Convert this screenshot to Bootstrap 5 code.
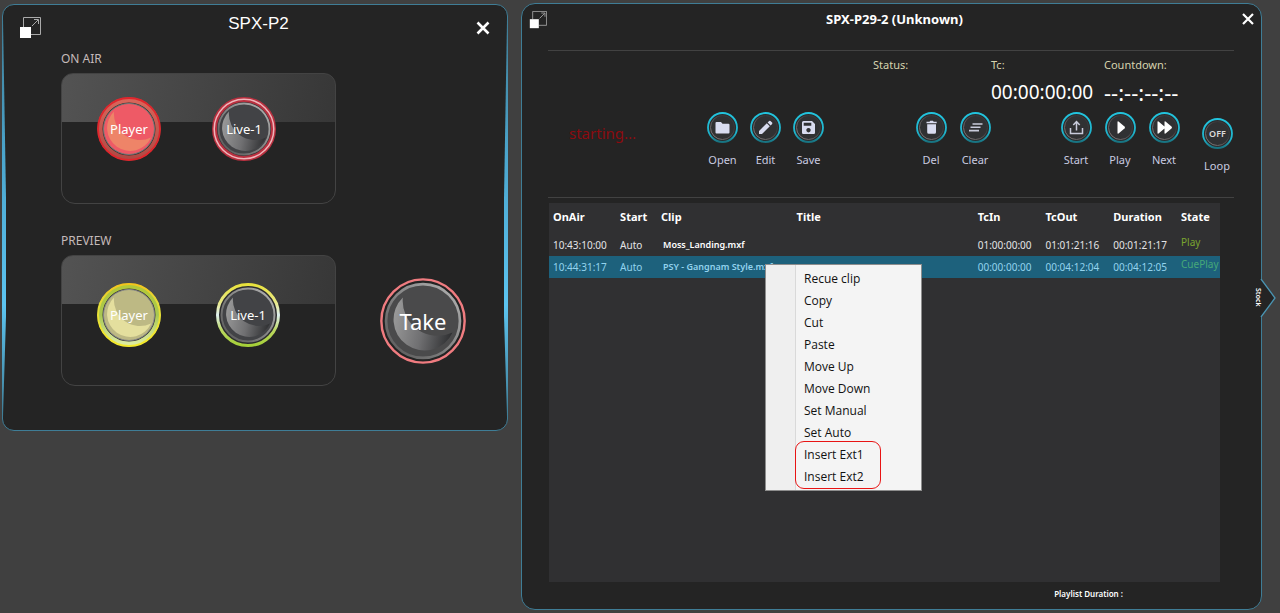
<!DOCTYPE html>
<html lang="en">
<head>
<meta charset="utf-8">
<meta name="viewport" content="width=device-width, initial-scale=1">
<title>SPX playout</title>
<link href="https://cdn.jsdelivr.net/npm/bootstrap@5.3.0/dist/css/bootstrap.min.css" rel="stylesheet">
<style>
  :root { --edge: #3f7d96; --glow: #52b4dc; --panel: #242424; --ui: "Noto Sans", "Open Sans", sans-serif; }
  body { background: #404040; color: #fff; font-family: var(--ui); font-size: 11px; line-height: 16px; min-height: 100vh; }
  button { font-family: inherit; color: inherit; }
  .desk { padding: 3px 18px 3px 2px; gap: 13px; min-height: 100vh; }
  .panel { background: var(--panel); border: 1px solid var(--edge); position: relative; min-width: 0; }
  .ghost { background: none; border: 0; padding: 0; line-height: 0; }

  /* switcher panel */
  .switcher { flex: 405 1 0; border-radius: 12px; margin-top: 1px; padding: 0 41px 44px 58px; }
  .switcher::before, .switcher::after { content: ""; position: absolute; top: 14px; bottom: 14px; width: 5px; background: linear-gradient(#3f7d96, #4ba6ce 35%, #5cc4f0 72%, #3f7d96); }
  .switcher::before { left: -1px; clip-path: polygon(0 0, 1px 0, 4px 45%, 4px 75%, 1px 100%, 0 100%); }
  .switcher::after { right: -1px; clip-path: polygon(100% 0, 4px 0, 1px 45%, 1px 75%, 4px 100%, 100% 100%); }
  .switcher-head { margin: 0 -24px 0 -42px; height: 45px; }
  .switcher-title { font: 17px/38px "Liberation Sans", Arial, sans-serif; margin: 0; }
  .switcher-body { gap: 44px; }
  .bus-label { font-size: 12px; line-height: 18px; color: #c4baba; margin: 0 0 5px; font-weight: 400; }
  .bus { height: 131px; border: 1px solid #434343; border-radius: 12px 12px 14px 14px; padding: 23px 35px; gap: 51px; align-items: flex-start; background: linear-gradient(100deg, #535353, #373737) top / 100% 48px no-repeat; }
  .bus-preview { padding-top: 27px; gap: 55px; }
  .bus-gap { height: 28px; }
  .orb { display: grid; place-items: center; width: 64px; height: 64px; font-size: 13px; flex: none; }
  .orb > * { grid-area: 1 / 1; }
  .orb svg { width: 100%; height: 100%; }
  .orb-take { width: 86px; height: 86px; font-size: 22px; margin-bottom: 22px; }

  /* playlist panel */
  .playlist { flex: 686 1 0; border-radius: 14px; padding: 0 27px 0 26px; }
  .playlist-head { margin: 0 -20px 0 -19px; height: 46px; padding-top: 7px; }
  .playlist-title { font-size: 13px; line-height: 16px; font-weight: 700; margin: 0; }
  .rule { border-top: 1px solid #424242; opacity: 1; margin: 0; }
  .clocks { height: 61px; padding-top: 6px; color: #d6d3ae; }
  .clock-cell { width: 113px; }
  .clock-cell-status { width: 118px; }
  .clock-cell-count { width: 130px; }
  .clock-value { color: #fff; font-size: 19px; line-height: 24px; margin-top: 7px; display: block; }
  .clock-cell-count .clock-value { font-size: 22px; }
  .tools { height: 85px; }
  .starting { color: #8c0b0f; font-size: 15px; line-height: 20px; margin: 11px auto 0 21px; }
  .tool { width: 44px; background: none; border: 0; padding: 0; color: #c9cbe0; font-size: 11px; line-height: 16px; }
  .tool svg { display: block; width: 31px; height: 31px; margin: 0 auto 9px; }
  .tool-compact { width: 43px; }
  .tool-loop { width: 34px; margin: 6px 0 0 14px; }
  .group-edit { margin-right: 79px; }
  .group-clear { margin-right: 57px; }
  .list-area { background: #303032; margin: 5px 14px 0 1px; position: relative; min-height: 379px; }
  .clips { table-layout: fixed; width: 100%; border-collapse: collapse; white-space: nowrap; }
  .clips th, .clips td { padding: 0 0 0 4px; height: 22px; font-size: 10px; color: #e4e4e6; }
  .clips thead th { height: 31px; font-size: 11px; padding-bottom: 3px; color: #fff; }
  .clips .clip-name { font-size: 9px; font-weight: 600; padding-left: 6px; color: #fff; }
  .clips .state { vertical-align: top; line-height: 16px; color: #7ba52f; }
  .clips .selected { background: #1d617c; }
  .clips .selected td { color: #93d3ee; }
  .clips .selected .state { color: #46a878; }
  .w-air { width: 10%; } .w-start { width: 6.1%; } .w-clip { width: 20.2%; } .w-title { width: 27%; } .w-tc { width: 10.1%; }
  .total { font-size: 8px; line-height: 12px; font-weight: 600; margin: 6px 111px 9px 0; }

  .clip-menu { --bs-dropdown-min-width: 157px; left: 216px; top: 61px; padding: 3px 1px 2px; border: 1px solid #8d8d8d; border-radius: 0; background: linear-gradient(90deg, #efefef 29px, #d9d9d9 29px 30px, #f4f4f4 30px); font-family: "Open Sans", "Noto Sans", sans-serif; }
  .clip-menu .dropdown-item { font-size: 12px; line-height: 22px; padding: 0 0 0 37px; color: #111; }
  .ext-group { position: relative; }
  .ext-group::after { content: ""; position: absolute; inset: -3px 39px -1px 28px; border: 1px solid #e81414; border-radius: 9px; pointer-events: none; }

  .stock { position: absolute; left: calc(100% - 8px); top: 275px; width: 23px; height: 38px; }
  .stock svg { position: absolute; left: 7px; top: 0; width: 16px; height: 38px; }
  .stock span { position: absolute; left: 0; top: 9px; writing-mode: vertical-rl; font-size: 7px; line-height: 10px; font-weight: 600; }
</style>
</head>
<body>
<svg width="0" height="0" class="position-absolute" aria-hidden="true">
  <defs>
    <linearGradient id="gRed" x2="0" y2="1"><stop stop-color="#d9665a"/><stop offset="1" stop-color="#b04a44"/></linearGradient>
    <linearGradient id="gYel" x2="0" y2="1"><stop stop-color="#f4c41c"/><stop offset=".3" stop-color="#e3dc3a"/><stop offset="1" stop-color="#f4e92a"/></linearGradient>
    <linearGradient id="gLime" x2="0" y2="1"><stop stop-color="#b3c838"/><stop offset=".5" stop-color="#a9c852"/><stop offset="1" stop-color="#dcebA4"/></linearGradient>
    <linearGradient id="gLive" x2="0" y2="1"><stop stop-color="#e8e23c"/><stop offset=".3" stop-color="#e9e98a"/><stop offset=".5" stop-color="#dff0f0"/><stop offset=".75" stop-color="#bcd860"/><stop offset="1" stop-color="#a5cf38"/></linearGradient>
    <linearGradient id="gGrey" x1="0" y1=".4" x2="1" y2=".6"><stop stop-color="#989898"/><stop offset=".5" stop-color="#707072"/><stop offset="1" stop-color="#303133"/></linearGradient>
    <linearGradient id="gRim" x1="0" y1="1" x2="1" y2="0"><stop stop-color="#555"/><stop offset="1" stop-color="#b4b4b4"/></linearGradient>
    <linearGradient id="gCyan" x2="0" y2="1"><stop stop-color="#22c4de"/><stop offset=".7" stop-color="#1fb4cc"/><stop offset="1" stop-color="#18717f"/></linearGradient>
    <linearGradient id="gLip" x1="0" y1="1" x2="1" y2="0"><stop stop-color="#8d8585"/><stop offset=".7" stop-color="#3a3a3c"/></linearGradient>
    <path id="moon" d="M17 14.500A23 23 0 1 0 54 40.500A26 26 0 0 1 17 14.500Z"/>
    <g id="knob"><circle cx="15.500" cy="15.500" r="14.500" fill="#2b2b2d" stroke="url(#gCyan)" stroke-width="1.800"/><circle cx="15.500" cy="15.500" r="12" fill="#303133" stroke="url(#gLip)"/></g>
    <g id="pop" fill="none"><path d="M4.500 10V.5h17v17H12" stroke="#aaa"/><path d="M13 9l6-6M15 2.500h4.500V7" stroke="#aaa"/><path d="M1 10h11v11H1z" fill="#fff"/></g>
  </defs>
</svg>

<main class="desk d-flex align-items-start">
  <section class="panel switcher">
    <header class="switcher-head d-flex justify-content-between">
      <button class="ghost" aria-label="Detach"><svg width="22" height="22" viewBox="0 0 22 22"><use href="#pop"/></svg></button>
      <h1 class="switcher-title">SPX-P2</h1>
      <button class="ghost" aria-label="Close"><svg width="14" height="14" viewBox="0 0 14 14"><path d="M1.500 1.500l11 11m0-11l-11 11" stroke="#fff" stroke-width="2.600"/></svg></button>
    </header>
    <div class="switcher-body d-flex align-items-end">
      <div class="flex-grow-1">
        <h2 class="bus-label">ON AIR</h2>
        <div class="bus d-flex">
          <button class="ghost orb"><svg viewBox="0 0 64 64"><circle cx="32" cy="32" r="29" fill="#333" stroke="url(#gRed)" stroke-width="5"/><circle cx="32" cy="32" r="31" fill="none" stroke="#e0252c" stroke-width="1.800"/><circle cx="32" cy="32" r="25.500" fill="#ee5a66" stroke="#777" stroke-width="1"/><use href="#moon" fill="#ee8468"/></svg><span>Player</span></button>
          <button class="ghost orb"><svg viewBox="0 0 64 64"><circle cx="32" cy="32" r="29.500" fill="#303133" stroke="#b9303f" stroke-width="5"/><circle cx="32" cy="32" r="29.800" fill="none" stroke="#efb4ba" stroke-width="1.500"/><circle cx="32" cy="32" r="25.500" fill="#424346" stroke="url(#gRim)" stroke-width="1.800"/><use href="#moon" fill="url(#gGrey)"/></svg><span>Live-1</span></button>
        </div>
        <div class="bus-gap"></div>
        <h2 class="bus-label">PREVIEW</h2>
        <div class="bus bus-preview d-flex">
          <button class="ghost orb"><svg viewBox="0 0 64 64"><circle cx="32" cy="32" r="29" fill="#333" stroke="url(#gLime)" stroke-width="5"/><circle cx="32" cy="32" r="31" fill="none" stroke="url(#gYel)" stroke-width="2"/><circle cx="32" cy="32" r="25.500" fill="#bdb984" stroke="#888" stroke-width="1"/><use href="#moon" fill="#e4df9e"/></svg><span>Player</span></button>
          <button class="ghost orb"><svg viewBox="0 0 64 64"><circle cx="32" cy="32" r="30.500" fill="#2c2c2e" stroke="url(#gLive)" stroke-width="3"/><circle cx="32" cy="32" r="26.500" fill="#424346" stroke="url(#gRim)" stroke-width="2"/><use href="#moon" fill="url(#gGrey)"/></svg><span>Live-1</span></button>
        </div>
      </div>
      <button class="ghost orb orb-take"><svg viewBox="0 0 64 64"><circle cx="32" cy="32" r="31" fill="#232323" stroke="#f07c80" stroke-width="1.800"/><circle cx="32" cy="32" r="27.500" fill="#4a4a4b" stroke="url(#gRim)" stroke-width="2"/><use href="#moon" fill="url(#gGrey)"/></svg><span>Take</span></button>
    </div>
  </section>

  <section class="panel playlist d-flex flex-column align-self-stretch">
    <header class="playlist-head d-flex justify-content-between align-items-start">
      <button class="ghost" aria-label="Detach"><svg width="18" height="18" viewBox="0 0 22 22"><use href="#pop"/></svg></button>
      <h1 class="playlist-title">SPX-P29-2 (Unknown)</h1>
      <button class="ghost" aria-label="Close"><svg width="12" height="16" viewBox="0 -2 12 16"><path d="M1 1l10 10m0-10L1 11" stroke="#fff" stroke-width="2.200"/></svg></button>
    </header>
    <hr class="rule">
    <div class="clocks d-flex justify-content-end">
      <div class="clock-cell-status">Status:</div>
      <div class="clock-cell">Tc:<output class="clock-value">00:00:00:00</output></div>
      <div class="clock-cell-count">Countdown:<output class="clock-value">--:--:--:--</output></div>
    </div>
    <div class="tools d-flex align-items-start">
      <p class="starting">starting...</p>
      <div class="group-edit d-flex align-items-start">
        <button class="tool tool-compact"><svg viewBox="0 0 31 31"><use href="#knob"/><path d="M9.500 10h4.500l1.500 1.700h6q1 0 1 1v7.800q0 1-1 1h-12q-1 0-1-1V11q0-1 1-1z" fill="#d9dcf0"/></svg>Open</button>
        <button class="tool tool-compact"><svg viewBox="0 0 31 31"><use href="#knob"/><path d="M9 22v-3l7.800-7.800 3 3L12 22zM17.600 10.400l1.500-1.500q.7-.5 1.400 0l1.600 1.600q.5.700 0 1.400l-1.500 1.500z" fill="#d9dcf0"/></svg>Edit</button>
        <button class="tool tool-compact"><svg viewBox="0 0 31 31"><use href="#knob"/><path fill-rule="evenodd" d="M10.500 9h8.500l3 3v8.800q0 1.200-1.200 1.200H10.200Q9 22 9 20.800V10.500Q9 9 10.500 9zM10.700 10.700v3h7.600v-3zM15.500 16a2.200 2.200 0 1 0 .01 0z" fill="#d9dcf0"/></svg>Save</button>
      </div>
      <div class="group-clear d-flex align-items-start">
        <button class="tool"><svg viewBox="0 0 31 31"><use href="#knob"/><path d="M10.500 9.800h3l.8-1h2.600l.8 1h3v1.500H10.500zM11.200 12.300h8.800v7.900q0 1.500-1.500 1.500h-5.800q-1.500 0-1.500-1.500z" fill="#d9dcf0"/></svg>Del</button>
        <button class="tool"><svg viewBox="0 0 31 31"><use href="#knob"/><path d="M12.500 12h10M10.500 15.300h10M9 18.600h10" stroke="#c9ccdc" stroke-width="1.600"/></svg>Clear</button>
      </div>
      <div class="d-flex align-items-start">
        <button class="tool"><svg viewBox="0 0 31 31"><use href="#knob"/><path d="M9.500 16v5.500h12V16M15.500 18.500v-8M12.300 13l3.200-3.500 3.200 3.500" fill="none" stroke="#c9ccdc" stroke-width="1.500"/></svg>Start</button>
        <button class="tool"><svg viewBox="0 0 31 31"><use href="#knob"/><path d="M12.500 10q0-1 1-.6l6 5.200q1 .9 0 1.800l-6 5.200q-1 .4-1-.6z" fill="#fff"/></svg>Play</button>
        <button class="tool"><svg viewBox="0 0 31 31"><use href="#knob"/><path d="M8.500 10q0-1 1-.6l6 5v-4.400q0-1 1-.6l6 5.200q1 .9 0 1.800l-6 5.200q-1 .4-1-.6v-4.400l-6 5q-1 .4-1-.6z" fill="#fff"/></svg>Next</button>
        <button class="tool tool-loop"><svg viewBox="0 0 31 31"><use href="#knob"/><text x="15.500" y="19" text-anchor="middle" font-size="9" font-weight="600" fill="#dcdcdc">OFF</text></svg>Loop</button>
      </div>
    </div>
    <hr class="rule">
    <div class="list-area flex-grow-1">
      <table class="clips">
        <thead><tr><th class="w-air">OnAir</th><th class="w-start">Start</th><th class="w-clip">Clip</th><th class="w-title">Title</th><th class="w-tc">TcIn</th><th class="w-tc">TcOut</th><th class="w-tc">Duration</th><th>State</th></tr></thead>
        <tbody>
          <tr><td>10:43:10:00</td><td>Auto</td><td class="clip-name">Moss_Landing.mxf</td><td></td><td>01:00:00:00</td><td>01:01:21:16</td><td>00:01:21:17</td><td class="state">Play</td></tr>
          <tr class="selected"><td>10:44:31:17</td><td>Auto</td><td class="clip-name">PSY - Gangnam Style.mxf</td><td></td><td>00:00:00:00</td><td>00:04:12:04</td><td>00:04:12:05</td><td class="state">CuePlay</td></tr>
        </tbody>
      </table>
      <div class="dropdown-menu show clip-menu">
        <button class="dropdown-item">Recue clip</button>
        <button class="dropdown-item">Copy</button>
        <button class="dropdown-item">Cut</button>
        <button class="dropdown-item">Paste</button>
        <button class="dropdown-item">Move Up</button>
        <button class="dropdown-item">Move Down</button>
        <button class="dropdown-item">Set Manual</button>
        <button class="dropdown-item">Set Auto</button>
        <div class="ext-group">
          <button class="dropdown-item">Insert Ext1</button>
          <button class="dropdown-item">Insert Ext2</button>
        </div>
      </div>
    </div>
    <p class="total text-end">Playlist Duration :</p>
    <button class="ghost stock"><svg viewBox="0 0 16 38"><path d="M0 0h1L15 19 1 38H0z" fill="#242424"/><path d="M1 0l14 19L1 38" fill="none" stroke="#4a94b2" stroke-width="1.300"/></svg><span>Stock</span></button>
  </section>
</main>
<script src="https://cdn.jsdelivr.net/npm/bootstrap@5.3.0/dist/js/bootstrap.bundle.min.js"></script>
</body>
</html>
